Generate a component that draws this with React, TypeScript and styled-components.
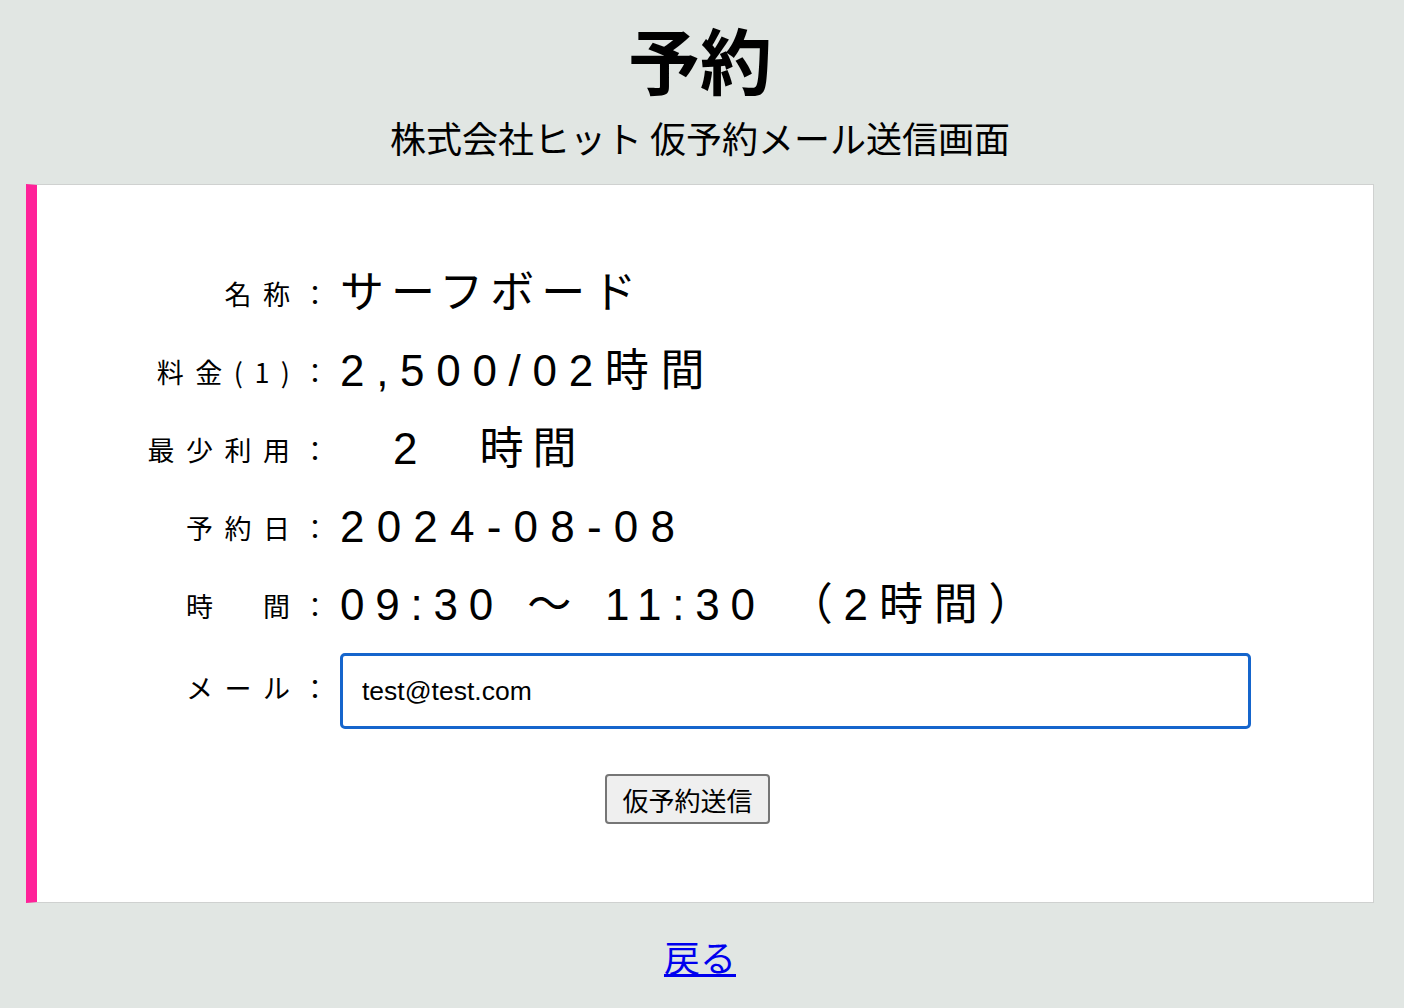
import React from "react";
import styled, { createGlobalStyle } from "styled-components";

const GlobalStyle = createGlobalStyle`
  html, body {
    margin: 0;
    padding: 0;
    background: #e1e6e3;
  }
  body {
    font-family: "Noto Sans CJK JP", sans-serif;
    color: #000;
  }
`;

const Page = styled.div`
  padding: 22px 30px 40px 26px;
`;

const Header = styled.header`
  text-align: center;
`;

const Title = styled.h1`
  margin: 0;
  font-size: 72px;
  line-height: 72px;
  font-weight: 700;
  font-family: "Noto Sans CJK JP", sans-serif;
`;

const Subtitle = styled.p`
  margin: 25px 0 0;
  font-size: 36px;
  line-height: 36px;
  font-family: "Noto Sans CJK JP", sans-serif;
`;

const Card = styled.section`
  margin-top: 29px;
  background: #ffffff;
  border: 1px solid #cfd1d0;
  border-left: 11px solid #ff2299;
  padding: 69px 0 78px;
`;

const Row = styled.div<{ $h?: number; $mt?: number }>`
  display: grid;
  grid-template-columns: 303px 911px;
  align-items: center;
  height: ${(p) => p.$h ?? 78}px;
  margin-top: ${(p) => p.$mt ?? 0}px;
`;

const Label = styled.div<{ $lift?: number }>`
  text-align: right;
  font-size: 27px;
  letter-spacing: 11.5px;
  font-family: "Noto Sans CJK JP", sans-serif;
  white-space: nowrap;
  padding-bottom: ${(p) => p.$lift ?? 0}px;
`;

const Value = styled.div<{ $spacing: number }>`
  font-size: 44px;
  line-height: 1;
  letter-spacing: ${(p) => p.$spacing}px;
  font-family: "Liberation Sans", "Noto Sans CJK JP", sans-serif;
  white-space: pre;
`;

const MailInput = styled.input`
  box-sizing: border-box;
  width: 911px;
  height: 76px;
  border: 3px solid #1565cc;
  border-radius: 5px;
  padding: 0 19px;
  font-size: 26.5px;
  font-family: "Liberation Sans", Arial, sans-serif;
  color: #000;
  background: #fff;
  outline: none;
`;

const ButtonRow = styled.div`
  display: flex;
  justify-content: center;
  padding-right: 35px;
  margin-top: 45px;
`;

const SubmitButton = styled.button`
  box-sizing: border-box;
  height: 50px;
  padding: 0 15.5px;
  border: 2px solid #767676;
  border-radius: 4px;
  background: #efefef;
  font-size: 26px;
  font-family: "Noto Sans CJK JP", sans-serif;
  color: #000;
  cursor: pointer;
`;

const Footer = styled.div`
  text-align: center;
  margin-top: 35px;
`;

const BackLink = styled.a`
  font-size: 36px;
  line-height: 36px;
  color: #0000ee;
  text-decoration: underline;
  font-family: "Noto Sans CJK JP", sans-serif;
`;

const rows: { label: string; value: string; spacing: number }[] = [
  { label: "名称：", value: "サーフボード", spacing: 7 },
  { label: "料金(1)：", value: "2,500/02時間", spacing: 11.7 },
  { label: "最少利用：", value: "　2　時間", spacing: 9 },
  { label: "予約日：", value: "2024-08-08", spacing: 12.2 },
  { label: "時　間：", value: "09:30 ～ 11:30 （2時間）", spacing: 10.8 },
];

export default function App() {
  return (
    <>
      <GlobalStyle />
      <Page>
        <Header>
          <Title>予約</Title>
          <Subtitle>株式会社ヒット 仮予約メール送信画面</Subtitle>
        </Header>
        <Card>
          {rows.map((r) => (
            <Row key={r.label}>
              <Label>{r.label}</Label>
              <Value $spacing={r.spacing}>{r.value}</Value>
            </Row>
          ))}
          <Row $h={76} $mt={9}>
            <Label $lift={8}>メール：</Label>
            <MailInput type="email" defaultValue="test@test.com" />
          </Row>
          <ButtonRow>
            <SubmitButton type="button">仮予約送信</SubmitButton>
          </ButtonRow>
        </Card>
        <Footer>
          <BackLink href="#">戻る</BackLink>
        </Footer>
      </Page>
    </>
  );
}
